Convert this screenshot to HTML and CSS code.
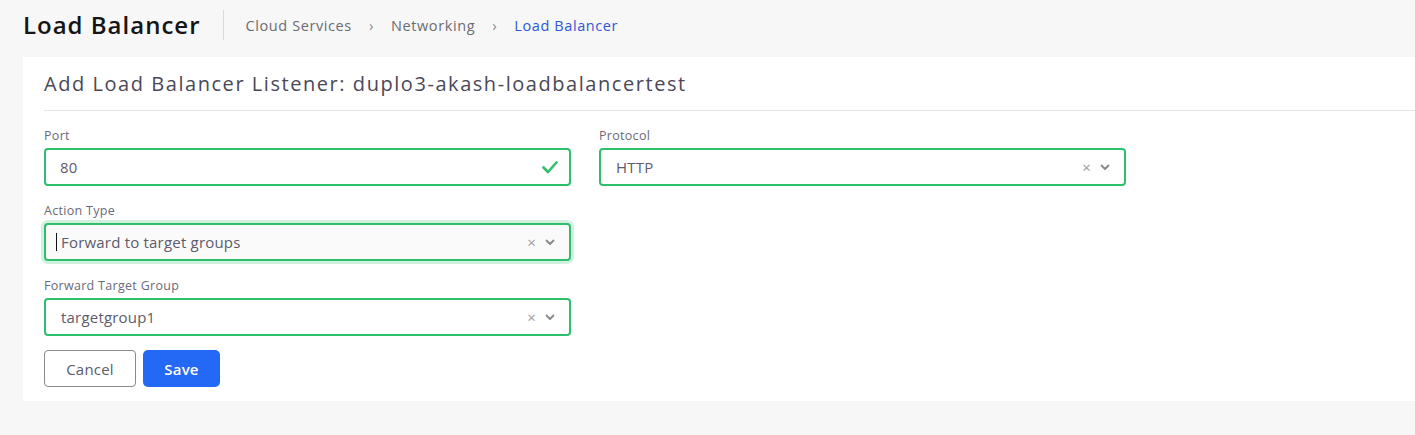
FILE: index.html
```html
<!DOCTYPE html>
<html>
<head>
<meta charset="utf-8">
<link rel="stylesheet" href="styles.css">
</head>
<body>
<header class="topbar">
  <h1 class="page-title">Load Balancer</h1>
  <nav class="crumbs">
    <span class="crumb">Cloud Services</span>
    <span class="sep">›</span>
    <span class="crumb">Networking</span>
    <span class="sep">›</span>
    <span class="crumb active">Load Balancer</span>
  </nav>
</header>
<main class="card">
  <div class="card-head">Add Load Balancer Listener: duplo3-akash-loadbalancertest</div>
  <form class="form">
    <div class="field">
      <label class="label">Port</label>
      <div class="control">
        <span class="value">80</span>
        <svg class="check" width="16" height="13" viewBox="0 0 16 13"><path d="M1.5 6.5 L6 11 L14.5 1.5" fill="none" stroke="#2dbf6c" stroke-width="2.6" stroke-linecap="round" stroke-linejoin="round"/></svg>
      </div>
    </div>
    <div class="field">
      <label class="label">Protocol</label>
      <div class="control select">
        <span class="value">HTTP</span>
        <span class="icons"><span class="clear">×</span><svg class="chev" width="10" height="7" viewBox="0 0 10 7"><path d="M1.5 1.5 L5 5 L8.5 1.5" fill="none" stroke="#888" stroke-width="1.8" stroke-linecap="round" stroke-linejoin="round"/></svg></span>
      </div>
    </div>
    <div class="field col1">
      <label class="label">Action Type</label>
      <div class="control select focus">
        <span class="caret"></span><span class="value">Forward to target groups</span>
        <span class="icons"><span class="clear">×</span><svg class="chev" width="10" height="7" viewBox="0 0 10 7"><path d="M1.5 1.5 L5 5 L8.5 1.5" fill="none" stroke="#888" stroke-width="1.8" stroke-linecap="round" stroke-linejoin="round"/></svg></span>
      </div>
    </div>
    <div class="field col1">
      <label class="label">Forward Target Group</label>
      <div class="control select">
        <span class="value">targetgroup1</span>
        <span class="icons"><span class="clear">×</span><svg class="chev" width="10" height="7" viewBox="0 0 10 7"><path d="M1.5 1.5 L5 5 L8.5 1.5" fill="none" stroke="#888" stroke-width="1.8" stroke-linecap="round" stroke-linejoin="round"/></svg></span>
      </div>
    </div>
    <div class="actions col1">
      <button type="button" class="btn btn-cancel">Cancel</button>
      <button type="button" class="btn btn-save">Save</button>
    </div>
  </form>
</main>
</body>
</html>
```
FILE: styles.css
```css
* { box-sizing: border-box; }
body {
  margin: 0;
  background: #f7f7f7;
  font-family: "Open Sans", "DejaVu Sans", sans-serif;
  width: 1415px;
  height: 435px;
  overflow: hidden;
}
.topbar {
  display: flex;
  align-items: center;
  height: 50px;
  padding-left: 23px;
}
.page-title {
  margin: 0;
  font-size: 24px;
  font-weight: 600;
  letter-spacing: 1px;
  color: #151515;
  padding-right: 22px;
  border-right: 1px solid #d9d9de;
  line-height: 30px;
}
.crumbs {
  display: flex;
  align-items: center;
  margin-left: 22px;
  font-size: 14.5px;
  letter-spacing: 0.6px;
  color: #6c6c72;
}
.sep {
  margin: 0 17px;
  color: #8a8a90;
  font-size: 15px;
}
.crumb.active { color: #2f56d6; }
.card {
  margin: 7px 0 0 23px;
  background: #fff;
  height: 344px;
  padding-left: 21px;
}
.card-head {
  height: 54px;
  line-height: 53px;
  font-size: 20px;
  letter-spacing: 1.55px;
  color: #4a4858;
  border-bottom: 1px solid #e6e4ec;
}
.form {
  display: grid;
  grid-template-columns: 527px 527px;
  column-gap: 28px;
  row-gap: 16px;
  padding-top: 16px;
  align-content: start;
}
.col1 { grid-column: 1; }
.label {
  display: block;
  font-size: 12.5px;
  letter-spacing: 0.3px;
  line-height: 18px;
  color: #6b6a78;
  margin-bottom: 3px;
}
.control {
  height: 38px;
  border: 2px solid #2dbf6c;
  border-radius: 4px;
  display: flex;
  align-items: center;
  padding: 0 10px 0 14px;
  font-size: 15px;
  letter-spacing: 0.2px;
  color: #5d5b6c;
  background: #fff;
}
.control.select { padding-left: 15px; }
.control .value { flex: 1; }
.control.focus {
  background: #fafafa;
  box-shadow: 0 0 0 3px rgba(45, 191, 108, 0.22);
  padding-left: 10px;
}
.caret {
  width: 1px;
  height: 18px;
  background: #111;
  margin-right: 4px;
}
.check { margin-right: 1px; }
.icons {
  display: flex;
  align-items: center;
  gap: 9px;
  margin-right: 4px;
}
.clear {
  color: #9a9aa2;
  font-size: 15px;
  line-height: 1;
}
.actions {
  display: flex;
  gap: 7px;
  margin-top: -2px;
}
.btn {
  height: 37px;
  font-family: inherit;
  font-size: 15px;
  letter-spacing: 0.2px;
  border-radius: 4px;
  cursor: pointer;
}
.btn-cancel {
  width: 92px;
  background: #fff;
  border: 1px solid #8b8b8b;
  color: #5d5b6c;
}
.btn-save {
  width: 77px;
  background: #2468f6;
  border: none;
  border-radius: 5px;
  color: #fff;
  font-weight: 600;
}
```
